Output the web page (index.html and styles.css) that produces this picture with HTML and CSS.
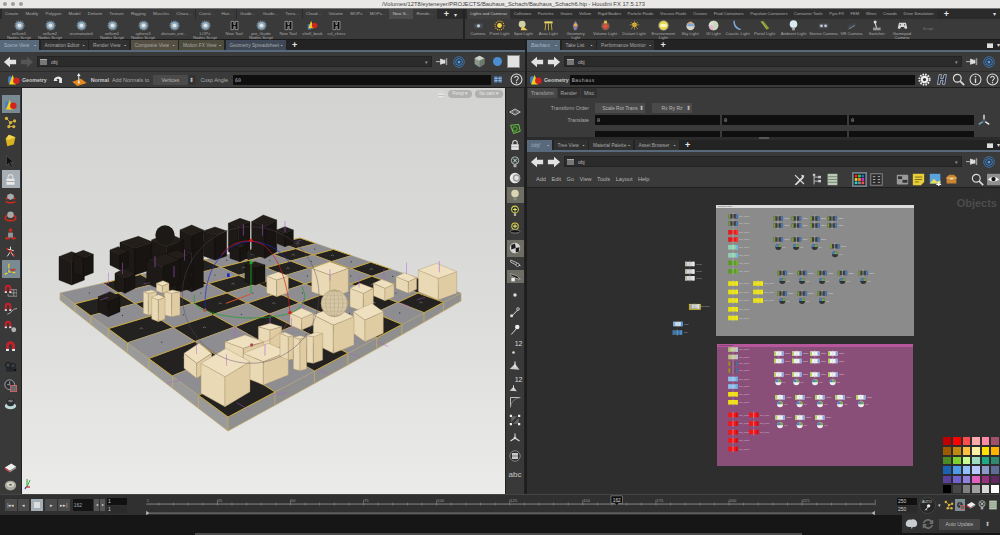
FILE: index.html
```html
<!DOCTYPE html>
<html lang="en">
<head>
<meta charset="utf-8">
<title>Houdini FX 17.5.173</title>
<link rel="stylesheet" href="styles.css">
</head>
<body>
<svg class="defs" width="0" height="0" aria-hidden="true">
  <symbol id="gear" viewBox="0 0 16 16"><circle cx="8" cy="8" r="6" fill="#8ba3b3"/><circle cx="8" cy="8" r="6.6" fill="none" stroke="#6f8797" stroke-width="1.6" stroke-dasharray="1.6 1.2"/><circle cx="8" cy="8" r="3" fill="#dfe6ea"/></symbol>
  <symbol id="hh" viewBox="0 0 16 16"><path d="M3 2h4v4.5h2V2h4v12H9V9.500H7V14H3z" fill="#111" stroke="#d8d8d8" stroke-width=".8"/></symbol>
  <symbol id="geo" viewBox="0 0 16 16"><rect x="1.500" y="4" width="5" height="9" rx="2" fill="#3e7fd0"/><polygon points="7,2 2.500,14 11,14" fill="#f1d21f"/><circle cx="11.500" cy="9.500" r="4" fill="#d3231f"/></symbol>
  <symbol id="back" viewBox="0 0 16 16"><path d="M1 8l7-6v3.500h7v5H8V14z" fill="currentColor"/></symbol>
  <symbol id="fwd" viewBox="0 0 16 16"><path d="M15 8L8 2v3.500H1v5h7V14z" fill="currentColor"/></symbol>
  <symbol id="pin" viewBox="0 0 16 16"><path d="M0 7.500h6M6 4v7l4-1.500h2V5.500h-2z" fill="#ddd" stroke="#ddd"/><rect x="13" y="3" width="2" height="9" fill="#999"/></symbol>
  <symbol id="target" viewBox="0 0 16 16"><circle cx="8" cy="8" r="7" fill="#24364a" stroke="#4f86bd" stroke-width="1"/><circle cx="8" cy="8" r="4.500" fill="none" stroke="#5c9bd8"/><circle cx="8" cy="8" r="2" fill="#5c9bd8"/></symbol>
  <symbol id="cube" viewBox="0 0 16 16"><path d="M8 1l6 3v7l-6 4-6-4V4z" fill="#8b9a8c"/><path d="M8 1l6 3-6 3-6-3z" fill="#c8d2c8"/><path d="M8 7v8l6-4V4z" fill="#6c7a6e"/></symbol>
  <symbol id="help" viewBox="0 0 16 16"><circle cx="8" cy="8" r="6.700" fill="none" stroke="#ddd" stroke-width="1.300"/><path d="M5.800 6.300a2.200 2.200 0 1 1 3.300 1.900c-.8.500-1.100.8-1.100 1.800" fill="none" stroke="#ddd" stroke-width="1.300"/><circle cx="8" cy="12" r=".9" fill="#ddd"/></symbol>
  <symbol id="info" viewBox="0 0 16 16"><circle cx="8" cy="8" r="6.700" fill="none" stroke="#ddd" stroke-width="1.300"/><rect x="7.200" y="6.800" width="1.600" height="5.500" fill="#ddd"/><circle cx="8" cy="4.600" r="1" fill="#ddd"/></symbol>
  <symbol id="mag" viewBox="0 0 16 16"><circle cx="6.500" cy="6.500" r="4.800" fill="none" stroke="#ddd" stroke-width="1.400"/><path d="M10 10l5 5" stroke="#ddd" stroke-width="2"/></symbol>
  <symbol id="wgear" viewBox="0 0 16 16"><circle cx="8" cy="8" r="4.500" fill="#eee"/><circle cx="8" cy="8" r="6.300" fill="none" stroke="#eee" stroke-width="2.400" stroke-dasharray="2 1.300"/><circle cx="8" cy="8" r="2" fill="#333"/></symbol>
  <symbol id="bigh" viewBox="0 0 16 16"><path d="M5 2h3l-1 5h3l1-5h3l-2 12h-3l1-5H7l-1 5H3z" fill="#1c2a44" stroke="#dfe6ef" stroke-width=".8"/></symbol>
  <symbol id="points" viewBox="0 0 16 16"><path d="M3 3l5 5 5-2M8 8l-2 5 6 0" stroke="#c9b56b" fill="none"/><g fill="#d8b33a"><circle cx="3" cy="3" r="2"/><circle cx="8" cy="8" r="2"/><circle cx="13" cy="6" r="2"/><circle cx="6" cy="13" r="2"/><circle cx="12" cy="13" r="2"/></g></symbol>
  <symbol id="ycube" viewBox="0 0 16 16"><path d="M6 1l8 3-2 9-8 2-2-9z" fill="#d8b21f"/><path d="M6 1l8 3-8 3-4-1z" fill="#efd44b"/></symbol>
  <symbol id="arrow" viewBox="0 0 16 16"><path d="M3 1v12l3-3 2.500 5 2-1L8 9h4z" fill="#111" stroke="#666" stroke-width=".6"/></symbol>
  <symbol id="lock" viewBox="0 0 16 16"><path d="M5 7V5a3 3 0 0 1 6 0v2" fill="none" stroke="#ddd" stroke-width="1.400"/><rect x="3" y="7" width="10" height="7.500" fill="#e8e8e8"/><rect x="3" y="10" width="10" height="1" fill="#999"/></symbol>
  <symbol id="hand1" viewBox="0 0 16 16"><path d="M1 9l4-2-1 4zM15 9l-4-2 1 4z" fill="#d02a1a"/><path d="M2 13q6 3 12 0" stroke="#d02a1a" stroke-width="1.800" fill="none"/><path d="M8 3l4 2v4l-4 2-4-2V5z" fill="#a8adb0"/></symbol>
  <symbol id="hand2" viewBox="0 0 16 16"><ellipse cx="8" cy="11" rx="6.500" ry="3.300" fill="none" stroke="#d02a1a" stroke-width="2"/><circle cx="8" cy="7" r="4" fill="#a5a9ac"/></symbol>
  <symbol id="hand3" viewBox="0 0 16 16"><path d="M8 1l3 4H9v2H7V5H5zM1 14l3-3v2h3v2H4v1zM15 14l-3-3v2H9v2h3v1z" fill="#d02a1a"/><rect x="5" y="7" width="6" height="6" fill="#90959a"/></symbol>
  <symbol id="pose" viewBox="0 0 16 16"><path d="M8 2v6l-4 6M8 8l4 6M4 5l8 2" stroke="#ddd" stroke-width="1.200" fill="none"/><g fill="#d02a1a"><circle cx="8" cy="8" r="1.700"/><circle cx="4" cy="5" r="1.200"/><circle cx="12" cy="12" r="1.300"/></g></symbol>
  <symbol id="hsel" viewBox="0 0 16 16"><path d="M6 1v10M6 11L1 14M6 11l8 1" stroke="#f0d020" stroke-width="1.500"/><circle cx="7" cy="10" r="3" fill="none" stroke="#3b6fc4"/><path d="M8 9l6-1" stroke="#d02a1a" stroke-width="2"/></symbol>
  <symbol id="magnet" viewBox="0 0 16 16"><path d="M2.500 13V7a5.500 5.500 0 0 1 11 0v6h-3.500V7a2 2 0 0 0-4 0v6z" fill="#c8202a"/><rect x="2.500" y="11" width="3.500" height="2.500" fill="#eee"/><rect x="10" y="11" width="3.500" height="2.500" fill="#eee"/></symbol>
  <symbol id="maggrid" viewBox="0 0 16 16"><path d="M1 10V5a4 4 0 0 1 8 0v5H6.500V5a1.500 1.500 0 0 0-3 0v5z" fill="#c8202a"/><rect x="1" y="9" width="2.500" height="2" fill="#eee"/><rect x="6.500" y="9" width="2.500" height="2" fill="#eee"/><path d="M8 7h8v8H5v-3M8 11h8M12 7v8" fill="none" stroke="#b8b8b8" stroke-width=".8"/></symbol>
  <symbol id="magcurve" viewBox="0 0 16 16"><path d="M1 10V5a4 4 0 0 1 8 0v5H6.500V5a1.500 1.500 0 0 0-3 0v5z" fill="#c8202a"/><rect x="1" y="9" width="2.500" height="2" fill="#eee"/><rect x="6.500" y="9" width="2.500" height="2" fill="#eee"/><path d="M4 15q4-1 6-4t6-3" fill="none" stroke="#c8c8c8" stroke-width=".9"/></symbol>
  <symbol id="magball" viewBox="0 0 16 16"><path d="M1 9V5a4 4 0 0 1 8 0v4H6.500V5a1.500 1.500 0 0 0-3 0v4z" fill="#c8202a"/><rect x="1" y="8" width="2.500" height="2" fill="#eee"/><rect x="6.500" y="8" width="2.500" height="2" fill="#eee"/><circle cx="12" cy="12" r="3" fill="#b4b4b4"/></symbol>
  <symbol id="cam" viewBox="0 0 16 16"><circle cx="5" cy="5" r="3.300" fill="#3a4046" stroke="#111"/><circle cx="11" cy="6" r="3" fill="#3a4046" stroke="#111"/><rect x="3" y="8" width="9" height="5" fill="#23272b"/><path d="M12 10l3-1v4l-3-1z" fill="#111"/></symbol>
  <symbol id="clock" viewBox="0 0 16 16"><circle cx="7" cy="7" r="6" fill="#2b2f33" stroke="#bbb"/><path d="M7 3v4h-3" stroke="#bbb" fill="none"/><rect x="8" y="8" width="7.500" height="7.500" fill="#6b6b6b" stroke="#d66"/></symbol>
  <symbol id="dome" viewBox="0 0 16 16"><ellipse cx="8" cy="11" rx="7" ry="4" fill="#bcd8d8"/><ellipse cx="8" cy="6.500" rx="5" ry="5" fill="#2c3034"/><ellipse cx="8" cy="5" rx="3" ry="1.500" fill="#777"/></symbol>
  <symbol id="pencil" viewBox="0 0 16 16"><path d="M1 8l8-5 6 4-8 5z" fill="#eee"/><path d="M1 8l6 4v2L1 10z" fill="#c44"/><path d="M7 12l8-5v2l-8 5z" fill="#999"/></symbol>
  <symbol id="disk" viewBox="0 0 16 16"><ellipse cx="8" cy="8" rx="7" ry="6" fill="#a8a89e"/><ellipse cx="8" cy="7" rx="4.500" ry="3" fill="#d6d6ca"/><ellipse cx="8" cy="7" rx="2" ry="1.300" fill="#6f6f66"/></symbol>
  <symbol id="swirl" viewBox="0 0 16 16"><path d="M2 6q6-5 11 0v7H9V8q-2-2-4 0l2 2H1z" fill="#e6e6e6"/></symbol>
  <symbol id="normal" viewBox="0 0 22 18"><polygon points="1,12 13,8 21,14 8,18" fill="#e68a1e"/><path d="M10 13V3" stroke="#eee" stroke-width="1.400"/><path d="M10 0l2.500 4h-5z" fill="#eee"/><circle cx="10" cy="13" r="1.400" fill="#eee"/></symbol>
  <symbol id="plane" viewBox="0 0 16 16"><path d="M1 8l7-4 7 4-7 4z" fill="none" stroke="#ddd" stroke-width="1.200"/><path d="M4 8l4-2 4 2-4 2z" fill="none" stroke="#999"/></symbol>
  <symbol id="ggrid" viewBox="0 0 16 16"><path d="M2 3l11-1 2 9-9 3z" fill="#2d4a2a" stroke="#78c850" stroke-width="1.200"/><circle cx="8" cy="8" r="3" fill="none" stroke="#78c850"/></symbol>
  <symbol id="bulbx" viewBox="0 0 16 16"><circle cx="8" cy="6" r="5" fill="#39423f" stroke="#cfd8d0"/><rect x="6" y="11" width="4" height="4" fill="#aaa"/><path d="M5.500 3.500l5 5m0-5l-5 5" stroke="#eee" stroke-width="1.200"/></symbol>
  <symbol id="ball" viewBox="0 0 16 16"><circle cx="8" cy="8" r="7" fill="#e9e9e9"/><circle cx="10" cy="8" r="5" fill="#9a9a9a"/><circle cx="10" cy="8" r="3" fill="#e0e0e0"/></symbol>
  <symbol id="bulb" viewBox="0 0 16 16"><circle cx="8" cy="6" r="5" fill="#d9d6b8"/><rect x="6" y="11" width="4" height="4" fill="#8a8a7a"/></symbol>
  <symbol id="ybulb" viewBox="0 0 16 16"><circle cx="8" cy="6" r="4.500" fill="#2c3030" stroke="#d6d24a" stroke-width="1.400"/><rect x="6.500" y="11" width="3" height="3.500" fill="#b5b5a0"/><path d="M8 3.500v5M5.500 6h5" stroke="#e8e46a" stroke-width="1.400"/></symbol>
  <symbol id="ybulb2" viewBox="0 0 16 16"><circle cx="8" cy="5.500" r="4.300" fill="#2c3030" stroke="#d6d24a" stroke-width="1.400"/><path d="M8 3v5M5.500 5.500h5" stroke="#e8e46a" stroke-width="1.400"/><ellipse cx="8" cy="12.500" rx="6.500" ry="2.300" fill="#111" stroke="#999"/></symbol>
  <symbol id="camball" viewBox="0 0 16 16"><circle cx="8" cy="8" r="7" fill="#d5d5d5"/><path d="M3 4l5-2 1 6-6 2zM9 8l5-1-1 6-4 1z" fill="#1c1c1c"/></symbol>
  <symbol id="glasses" viewBox="0 0 16 16"><path d="M1 3l9 4 5 4-6-1-8-4z" fill="none" stroke="#ddd" stroke-width="1.100"/><circle cx="11" cy="10" r="2.300" fill="#222" stroke="#ddd"/></symbol>
  <symbol id="camsel" viewBox="0 0 16 16"><path d="M1 4l9 3 5 5-5-1-9-4z" fill="#222" stroke="#ddd" stroke-width=".8"/><rect x="2" y="10" width="5" height="5" fill="#eee"/></symbol>
  <symbol id="dot" viewBox="0 0 16 16"><circle cx="8" cy="8" r="2.300" fill="#ddd"/></symbol>
  <symbol id="meas1" viewBox="0 0 16 16"><path d="M3 14L12 5" stroke="#ddd" stroke-width="1.300"/><circle cx="3.500" cy="13" r="2" fill="#ddd"/><circle cx="12" cy="4" r="1.800" fill="none" stroke="#ddd"/></symbol>
  <symbol id="drop" viewBox="0 0 16 16"><path d="M3 14l7-8" stroke="#ddd" stroke-width="1.300"/><circle cx="11" cy="4" r="3" fill="#eee"/></symbol>
  <symbol id="wedge" viewBox="0 0 16 16"><path d="M1 12l7-7 6 8z" fill="#ccc"/><path d="M8 2v8" stroke="#eee" stroke-width="1.400"/></symbol>
  <symbol id="corner" viewBox="0 0 16 16"><path d="M2 15V2h13" fill="none" stroke="#ccc" stroke-width="1.200"/><path d="M2 15Q3 4 15 2" fill="none" stroke="#888"/></symbol>
  <symbol id="selbox" viewBox="0 0 16 16"><rect x="3" y="3" width="10" height="10" fill="#666"/><path d="M3 13L13 3" stroke="#333" stroke-width="3"/><g fill="#eee"><rect x="1" y="1" width="3" height="3"/><rect x="12" y="1" width="3" height="3"/><rect x="1" y="12" width="3" height="3"/><rect x="12" y="12" width="3" height="3"/></g></symbol>
  <symbol id="tri" viewBox="0 0 16 16"><path d="M8 8V2M8 8L2 12M8 8l6 4" stroke="#ddd" stroke-width="1.400"/><circle cx="8" cy="8" r="1.800" fill="#ddd"/></symbol>
  <symbol id="ringbox" viewBox="0 0 16 16"><circle cx="8" cy="8" r="7" fill="#333" stroke="#999"/><rect x="4" y="4" width="8" height="8" fill="#c8c8c8"/><rect x="4" y="7.500" width="8" height="1" fill="#555"/></symbol>
  <symbol id="axis" viewBox="0 0 16 16"><path d="M8 9V2" stroke="#eee" stroke-width="1.500"/><path d="M8 9l-6 4" stroke="#7ab" stroke-width="1.500"/><path d="M8 9l6 4" stroke="#eee" stroke-width="1.500"/><circle cx="8" cy="9" r="2" fill="#456"/></symbol>
  <symbol id="tools" viewBox="0 0 16 16"><path d="M2 14L11 5l-1-3 4 1-1 3-9 9zM3 2l11 11-1 1L2 3z" fill="#ddd"/></symbol>
  <symbol id="tree" viewBox="0 0 16 16"><path d="M5 2v12M5 5h5M5 10h5" stroke="#bbb" stroke-width="1.200"/><rect x="10" y="3.500" width="3.500" height="3" fill="#ccc"/><rect x="10" y="8.500" width="3.500" height="3" fill="#ccc"/><rect x="3.500" y="1" width="3" height="2.500" fill="#ccc"/></symbol>
  <symbol id="list" viewBox="0 0 16 16"><rect x="2" y="1" width="12" height="14" fill="#b9cbb4"/><path d="M2 4.500h12M2 8h12M2 11.500h12" stroke="#6e7d6b"/></symbol>
  <symbol id="cgrid" viewBox="0 0 16 16"><rect x="1" y="1" width="14" height="14" fill="#111"/><g><rect x="2" y="2" width="3.500" height="3.500" fill="#d33"/><rect x="6.200" y="2" width="3.500" height="3.500" fill="#3c3"/><rect x="10.400" y="2" width="3.500" height="3.500" fill="#36c"/><rect x="2" y="6.200" width="3.500" height="3.500" fill="#ec3"/><rect x="6.200" y="6.200" width="3.500" height="3.500" fill="#e83"/><rect x="10.400" y="6.200" width="3.500" height="3.500" fill="#c3c"/><rect x="2" y="10.400" width="3.500" height="3.500" fill="#3cc"/><rect x="6.200" y="10.400" width="3.500" height="3.500" fill="#888"/><rect x="10.400" y="10.400" width="3.500" height="3.500" fill="#e55"/></g></symbol>
  <symbol id="sgrid" viewBox="0 0 16 16"><rect x="1" y="1" width="14" height="14" fill="#2a2a2a" stroke="#999"/><path d="M3.500 4.500h3M9.500 4.500h3M3.500 8h3M9.500 8h3M3.500 11.500h3M9.500 11.500h3" stroke="#ccc"/></symbol>
  <symbol id="netbox" viewBox="0 0 16 16"><rect x="1" y="2" width="14" height="12" rx="1" fill="#9a9a9a"/><rect x="2.500" y="4" width="5" height="3.500" fill="#333"/><rect x="8" y="8.500" width="6" height="3.500" fill="#333"/></symbol>
  <symbol id="sticky" viewBox="0 0 16 16"><path d="M1 1h14v10l-4 4H1z" fill="#e8cf3a"/><path d="M3.500 5h9M3.500 8h9M3.500 11h5" stroke="#675c10"/></symbol>
  <symbol id="image" viewBox="0 0 16 16"><rect x="1" y="1" width="13" height="12" fill="#5ba3dc"/><path d="M1 13l5-6 4 4 4-2v4z" fill="#e9dd5a"/><path d="M9 14h6M12 11v6" stroke="#fff" stroke-width="1.400"/></symbol>
  <symbol id="crate" viewBox="0 0 16 16"><path d="M2 5l3-3h6l3 3v8H2z" fill="#c78432"/><rect x="2" y="5" width="12" height="2.500" fill="#e3a14a"/><rect x="6" y="6" width="4" height="2" fill="#f2d9a8"/></symbol>
  <symbol id="eye" viewBox="0 0 16 16"><rect x="0" y="1" width="16" height="14" fill="#8f8f8f"/><path d="M1 8q7-7 14 0q-7 5-14 0z" fill="#fff"/><circle cx="8" cy="7.500" r="2.700" fill="#111"/></symbol>
  <symbol id="brain" viewBox="0 0 16 16"><path d="M2 8a5 5 0 0 1 6-5 5 5 0 0 1 7 5c0 3-3 4-5 3l-1 3-1-3C5 12 2 11 2 8z" fill="#c8ccd0"/></symbol>
  <symbol id="refresh" viewBox="0 0 16 16"><path d="M2 7a6 6 0 0 1 10-3l2-1v5H9l2-2a4 4 0 0 0-7 1zM14 9a6 6 0 0 1-10 3l-2 1V8h5l-2 2a4 4 0 0 0 7-1z" fill="#6d6f6d"/></symbol>
  <symbol id="skey" viewBox="0 0 16 16"><circle cx="10" cy="5" r="3" fill="#eee"/><path d="M9 7l-5 6M5 11l2 2" stroke="#eee" stroke-width="1.500"/></symbol>
  <symbol id="camera2" viewBox="0 0 16 16"><rect x="2" y="5" width="12" height="7" rx="1" fill="#4a4f55"/><circle cx="8" cy="8.500" r="2.500" fill="#bcc"/></symbol>
  <symbol id="sun" viewBox="0 0 16 16"><circle cx="8" cy="8" r="3.500" fill="#f4d24a"/><circle cx="8" cy="8" r="6.500" fill="none" stroke="#f0b828" stroke-width="1.500" stroke-dasharray="1.500 1.500"/></symbol>
  <symbol id="spot" viewBox="0 0 16 16"><circle cx="6" cy="6" r="5" fill="#cfcfa8"/><path d="M6 8l8 7H4z" fill="#e8c860"/></symbol>
  <symbol id="area" viewBox="0 0 16 16"><rect x="2" y="2" width="12" height="3" fill="#e8d870"/><path d="M4 5l-1 10M12 5l1 10M8 5v10" stroke="#d8c040" stroke-width="1.200"/></symbol>
  <symbol id="geolight" viewBox="0 0 16 16"><path d="M8 1l4 7-3 7H6L4 8z" fill="#8a7aa8"/><circle cx="8" cy="7" r="2.400" fill="#e8b040"/></symbol>
  <symbol id="vol" viewBox="0 0 16 16"><circle cx="8" cy="9" r="6" fill="#8a5a50"/><circle cx="8" cy="9" r="3" fill="#f05030"/><rect x="6" y="1" width="4" height="4" fill="#e8c850"/></symbol>
  <symbol id="dist" viewBox="0 0 16 16"><circle cx="8" cy="7" r="3.500" fill="#e8c040"/><path d="M3 3l10 10M13 3L3 13M8 1v13M1 7h14" stroke="#c09a30"/></symbol>
  <symbol id="env" viewBox="0 0 16 16"><circle cx="8" cy="8" r="7" fill="#e8d850" stroke="#888"/><ellipse cx="8" cy="8" rx="5" ry="2.500" fill="#fff5c0"/></symbol>
  <symbol id="sky" viewBox="0 0 16 16"><circle cx="8" cy="9" r="6" fill="#d8d4c8"/><path d="M3 9a5 5 0 0 1 10 0z" fill="#7ca8d8"/><circle cx="8" cy="4" r="2" fill="#e8a060"/></symbol>
  <symbol id="gi" viewBox="0 0 16 16"><circle cx="8" cy="8" r="7" fill="#dcdcd0"/><path d="M8 1a7 7 0 0 1 0 14z" fill="#c8d8c0"/><path d="M1 8a7 7 0 0 0 7 7V8z" fill="#e0b8c8"/></symbol>
  <symbol id="caustic" viewBox="0 0 16 16"><path d="M4 1q0 9 9 12l-1 2Q1 12 2 1z" fill="#7aa6d6"/></symbol>
  <symbol id="portal" viewBox="0 0 16 16"><path d="M2 2l4-1 9 11-4 2z" fill="#7c9a38"/><path d="M4 3l8 10" stroke="#d8c050"/></symbol>
  <symbol id="amb" viewBox="0 0 16 16"><circle cx="8" cy="6" r="5.500" fill="#d8ecf0"/><rect x="6" y="11" width="4" height="4" fill="#aaa"/></symbol>
  <symbol id="stereo" viewBox="0 0 16 16"><rect x="1" y="5" width="14" height="7" rx="1" fill="#4a4f55"/><circle cx="5" cy="8.500" r="2" fill="#ccd"/><circle cx="11" cy="8.500" r="2" fill="#ccd"/></symbol>
  <symbol id="vr" viewBox="0 0 16 16"><path d="M1 9l11-5 3 3-11 6z" fill="#3f454b"/><path d="M4 13l9-5" stroke="#9ab"/></symbol>
  <symbol id="switcher" viewBox="0 0 16 16"><rect x="3" y="11" width="11" height="4" fill="#999"/><path d="M8 11L6 4" stroke="#ddd" stroke-width="1.500"/><circle cx="6" cy="3" r="2.200" fill="#ddd"/></symbol>
  <symbol id="pad" viewBox="0 0 16 16"><path d="M3 4h10l2 8-3 1-2-3H6l-2 3-3-1z" fill="#d8d8d8"/><circle cx="5" cy="7" r="1" fill="#333"/><circle cx="11" cy="7" r="1" fill="#333"/></symbol>
  <symbol id="book" viewBox="0 0 16 16"><rect x="1" y="6" width="5" height="8" fill="#3a78c8"/><polygon points="6,1 2,12 10,12" fill="#f1d21f"/><circle cx="11" cy="8" r="4" fill="#d3231f"/></symbol>
  <symbol id="stripes" viewBox="0 0 16 16"><rect x="2" y="3" width="5" height="10" fill="#4a80c0"/><rect x="9" y="3" width="5" height="10" fill="#4a80c0"/><path d="M2 6h12M2 10h12" stroke="#d8e0ea"/></symbol>
</svg>

<div class="app">
  <header class="titlebar">
    <div class="lights"><i></i><i></i><i></i></div>
    <div class="wintitle">/Volumes/12T8/eyteneyer/PROJECTS/Bauhaus_Schach/Bauhaus_Schach6.hip - Houdini FX 17.5.173</div>
  </header>

  <section class="shelves">
    <div class="shelf shelf-l">
      <nav class="stabs">
        <span>Create</span><span>Modify</span><span>Polygon</span><span>Model</span><span>Deform</span><span>Texture</span><span>Rigging</span><span>Muscles</span><span>Chara...</span><span>Const...</span><span>Hair...</span><span>Guide...</span><span>Guide...</span><span>Terra...</span><span>Cloud...</span><span>Volume</span><span>MOPs</span><span>MOPs...</span><span class="on">New S...</span><span>Rende...</span><b class="plus">+</b><b class="caret">▾</b>
      </nav>
      <div class="tools tools-l">
        <div class="tool"><svg><use href="#gear"/></svg><p>vellum1<br>Nodes Script</p></div>
        <div class="tool"><svg><use href="#gear"/></svg><p>vellum2<br>Nodes Script</p></div>
        <div class="tool"><svg><use href="#gear"/></svg><p>resimonated</p></div>
        <div class="tool"><svg><use href="#gear"/></svg><p>vellum1<br>Nodes Script</p></div>
        <div class="tool"><svg><use href="#gear"/></svg><p>sphere3<br>Nodes Script</p></div>
        <div class="tool"><svg><use href="#gear"/></svg><p>division_ext...</p></div>
        <div class="tool"><svg><use href="#gear"/></svg><p>LOPs<br>Nodes Script</p></div>
        <div class="tool"><svg><use href="#hh"/></svg><p>New Tool</p></div>
        <div class="tool"><svg><use href="#gear"/></svg><p>pre_Guide<br>Nodes Script</p></div>
        <div class="tool"><svg><use href="#hh"/></svg><p>New Tool</p></div>
        <div class="tool"><svg><use href="#book"/></svg><p>shelf_book</p></div>
        <div class="tool"><svg><use href="#hh"/></svg><p>ssl_chess</p></div>
      </div>
    </div>
    <div class="shelf shelf-r">
      <nav class="stabs">
        <span class="on">Lights and Cameras</span><span>Collisions</span><span>Particles</span><span>Grains</span><span>Vellum</span><span>Rigid Bodies</span><span>Particle Fluids</span><span>Viscous Fluids</span><span>Oceans</span><span>Fluid Containers</span><span>Populate Containers</span><span>Container Tools</span><span>Pyro FX</span><span>FEM</span><span>Wires</span><span>Crowds</span><span>Drive Simulation</span><b class="plus">+</b><b class="caret end">▾</b>
      </nav>
      <div class="tools tools-r">
        <div class="tool"><svg><use href="#camera2"/></svg><p>Camera</p></div>
        <div class="tool"><svg><use href="#sun"/></svg><p>Point Light</p></div>
        <div class="tool"><svg><use href="#spot"/></svg><p>Spot Light</p></div>
        <div class="tool"><svg><use href="#area"/></svg><p>Area Light</p></div>
        <div class="tool"><svg><use href="#geolight"/></svg><p>Geometry<br>Light</p></div>
        <div class="tool"><svg><use href="#vol"/></svg><p>Volume Light</p></div>
        <div class="tool"><svg><use href="#dist"/></svg><p>Distant Light</p></div>
        <div class="tool"><svg><use href="#env"/></svg><p>Environment<br>Light</p></div>
        <div class="tool"><svg><use href="#sky"/></svg><p>Sky Light</p></div>
        <div class="tool"><svg><use href="#gi"/></svg><p>GI Light</p></div>
        <div class="tool"><svg><use href="#caustic"/></svg><p>Caustic Light</p></div>
        <div class="tool"><svg><use href="#portal"/></svg><p>Portal Light</p></div>
        <div class="tool"><svg><use href="#amb"/></svg><p>Ambient Light</p></div>
        <div class="tool"><svg><use href="#stereo"/></svg><p>Stereo Camera</p></div>
        <div class="tool"><svg><use href="#vr"/></svg><p>VR Camera</p></div>
        <div class="tool"><svg><use href="#switcher"/></svg><p>Switcher</p></div>
        <div class="tool"><svg><use href="#pad"/></svg><p>Gamepad<br>Camera</p></div>
        <div class="tool script"><p>Script</p></div>
      </div>
    </div>
  </section>

  <main class="workspace">
    <section class="pane pane-scene">
      <nav class="ptabs">
        <span class="on w39">Scene View<i>▪</i></span><span class="w47">Animation Editor<i>▪</i></span><span class="w40">Render View<i>▪</i></span><span class="tan w47">Composite View<i>▪</i></span><span class="olive w45">Motion FX View<i>▪</i></span><span class="slate w60">Geometry Spreadsheet<i>▪</i></span><b class="plus">+</b>
      </nav>
      <div class="pathbar">
        <svg class="nav white"><use href="#back"/></svg><svg class="nav grey"><use href="#fwd"/></svg>
        <div class="pathfield"><span class="folder"></span>obj<i class="drop">▾</i></div>
        <svg class="pi"><use href="#pin"/></svg><svg class="pi"><use href="#target"/></svg>
        <svg class="pi cubei"><use href="#cube"/></svg><span class="bluedot"></span><span class="whitesq"></span>
      </div>
      <div class="opbar">
        <svg class="opi first"><use href="#geo"/></svg><b>Geometry</b>
        <svg class="opi swirl"><use href="#swirl"/></svg><svg class="opi normal"><use href="#normal"/></svg>
        <b>Normal</b><span class="lbl">Add Normals to</span>
        <span class="select vert">Vertices</span><i class="spin">⬍</i>
        <span class="lbl cusp">Cusp Angle</span><span class="field cuspf">60</span>
        <svg class="opi stripes"><use href="#stripes"/></svg><svg class="opi"><use href="#help"/></svg>
      </div>
      <div class="scenebody">
        <aside class="tbar tbar-l">
          <div class="tb sel"><svg><use href="#geo"/></svg></div>
          <div class="tb"><svg><use href="#points"/></svg></div>
          <div class="tb"><svg><use href="#ycube"/></svg></div>
          <div class="tb g3"><svg><use href="#arrow"/></svg></div>
          <div class="tb sel"><svg><use href="#lock"/></svg></div>
          <div class="tb"><svg><use href="#hand1"/></svg></div>
          <div class="tb"><svg><use href="#hand2"/></svg></div>
          <div class="tb"><svg><use href="#hand3"/></svg></div>
          <div class="tb"><svg><use href="#pose"/></svg></div>
          <div class="tb sel"><svg><use href="#hsel"/></svg></div>
          <div class="tb g3"><svg><use href="#maggrid"/></svg></div>
          <div class="tb"><svg><use href="#magcurve"/></svg></div>
          <div class="tb"><svg><use href="#magball"/></svg></div>
          <div class="tb g2"><svg><use href="#magnet"/></svg></div>
          <div class="tb g3"><svg><use href="#cam"/></svg></div>
          <div class="tb"><svg><use href="#clock"/></svg></div>
          <div class="tb"><svg><use href="#dome"/></svg></div>
          <div class="tb push"><svg><use href="#pencil"/></svg></div>
          <div class="tb"><svg><use href="#disk"/></svg></div>
        </aside>
        <div class="viewport">
          <svg id="scene" class="scene" viewBox="22 88 483 406"></svg>
          <div class="vpbtns"><svg class="vlock"><use href="#lock"/></svg><span>Persp ▾</span><span>No cam ▾</span></div>
        </div>
        <aside class="tbar tbar-r">
          <div class="rb"><svg><use href="#plane"/></svg></div>
          <div class="rb"><svg><use href="#ggrid"/></svg></div>
          <div class="rb"><svg><use href="#lock"/></svg></div>
          <div class="rb"><svg><use href="#bulbx"/></svg></div>
          <div class="rb"><svg><use href="#ball"/></svg></div>
          <div class="rb sel"><svg><use href="#bulb"/></svg></div>
          <div class="rb"><svg><use href="#ybulb"/></svg></div>
          <div class="rb"><svg><use href="#ybulb2"/></svg></div>
          <div class="rb sel g4"><svg><use href="#camball"/></svg></div>
          <div class="rb thin"><svg><use href="#glasses"/></svg></div>
          <div class="rb sel thin"><svg><use href="#camsel"/></svg></div>
          <div class="rb g4"><svg><use href="#dot"/></svg></div>
          <div class="rb wide"><svg><use href="#meas1"/></svg></div>
          <div class="rb wide"><svg><use href="#drop"/></svg></div>
          <div class="rb wide txt"><em>12</em><svg class="dotmini"><use href="#dot"/></svg></div>
          <div class="rb wide"><svg><use href="#wedge"/></svg></div>
          <div class="rb wide txt"><em>12</em><svg class="dotmini"><use href="#wedge"/></svg></div>
          <div class="rb wide"><svg><use href="#corner"/></svg></div>
          <div class="rb wide"><svg><use href="#selbox"/></svg></div>
          <div class="rb wide"><svg><use href="#tri"/></svg></div>
          <div class="rb wide"><svg><use href="#ringbox"/></svg></div>
          <div class="rb wide abc">abc</div>
        </aside>
      </div>
    </section>

    <section class="rightcol">
      <section class="pane pane-params">
        <nav class="ptabs">
          <span class="on it w33">Bauhaus<i>▪</i></span><span class="w34">Take List<i>▪</i></span><span class="w57">Performance Monitor<i>▪</i></span><b class="plus">+</b>
          <span class="tabend"><u></u><em>▾</em></span>
        </nav>
        <div class="pathbar">
          <svg class="nav white"><use href="#back"/></svg><svg class="nav white"><use href="#fwd"/></svg>
          <div class="pathfield"><span class="folder"></span>obj<i class="drop">▾</i></div>
          <svg class="pi"><use href="#pin"/></svg><svg class="pi"><use href="#target"/></svg>
        </div>
        <div class="opbar geobar">
          <svg class="opi first"><use href="#geo"/></svg><b>Geometry</b>
          <span class="field namef">Bauhaus</span>
          <svg class="opi big"><use href="#wgear"/></svg><svg class="opi big"><use href="#bigh"/></svg><svg class="opi big"><use href="#mag"/></svg><svg class="opi big"><use href="#info"/></svg><svg class="opi big"><use href="#help"/></svg>
        </div>
        <div class="paramtabs"><span class="on">Transform</span><span>Render</span><span>Misc</span></div>
        <div class="params">
          <div class="prow"><label>Transform Order</label><span class="select sr">Scale Rot Trans<i>⬍</i></span><span class="select rx">Rx Ry Rz<i>⬍</i></span></div>
          <div class="prow"><label>Translate</label><span class="field v">0</span><span class="field v">0</span><span class="field v">0</span><svg class="axis"><use href="#axis"/></svg></div>
          <div class="prow cut"><label></label><span class="field v"></span><span class="field v"></span><span class="field v"></span></div>
        </div>
      </section>
      <div class="splitter"><i></i></div>
      <section class="pane pane-net">
        <nav class="ptabs">
          <span class="on it w25">/obj/<i>▪</i></span><span class="w34">Tree View<i>▪</i></span><span class="w44">Material Palette<i>▪</i></span><span class="w44">Asset Browser<i>▪</i></span><b class="plus">+</b>
          <span class="tabend"><u></u><em>▾</em></span>
        </nav>
        <div class="pathbar">
          <svg class="nav white"><use href="#back"/></svg><svg class="nav white"><use href="#fwd"/></svg>
          <div class="pathfield"><span class="folder"></span>obj<i class="drop">▾</i></div>
          <svg class="pi"><use href="#pin"/></svg><svg class="pi"><use href="#target"/></svg>
        </div>
        <div class="menubar">
          <span>Add</span><span>Edit</span><span>Go</span><span>View</span><span>Tools</span><span>Layout</span><span>Help</span>
          <div class="menuicons">
            <svg class="push2"><use href="#tools"/></svg><svg><use href="#tree"/></svg><svg><use href="#list"/></svg>
            <span class="seli m"><svg><use href="#cgrid"/></svg></span><svg><use href="#sgrid"/></svg>
            <svg class="m"><use href="#netbox"/></svg><svg><use href="#sticky"/></svg><svg><use href="#image"/></svg><svg><use href="#crate"/></svg>
            <svg class="m"><use href="#mag"/></svg><svg><use href="#eye"/></svg>
          </div>
        </div>
        <div class="netcanvas">
          <svg id="net" class="net" viewBox="527 187 473 307"></svg>
          <div class="objects">Objects</div>
          <div class="palette" id="palette"></div>
        </div>
      </section>
    </section>
  </main>

  <section class="timeline">
    <div class="transport">
      <span class="tbtn">|◂◂</span><span class="tbtn">◂</span><span class="tbtn stop"><i></i></span><span class="tbtn">▸</span><span class="tbtn">▸▸|</span>
      <span class="frame">162</span><span class="tstep">◂</span><span class="tstep">▸</span>
      <div class="range"><span>1</span><span>1</span></div>
    </div>
    <svg id="ruler" class="ruler" viewBox="127 494 768 21"></svg>
    <div class="tend">
      <div class="range r2"><span>250</span><span>250</span></div>
      <span class="autokey"><small>AUTO</small><svg><use href="#skey"/></svg></span><i class="tcaret">▾</i>
      <svg class="ti"><use href="#points"/></svg><span class="ti sel"><svg><use href="#clock"/></svg></span><svg class="ti"><use href="#pencil"/></svg><svg class="ti"><use href="#bulbx"/></svg><svg class="ti"><use href="#list"/></svg>
    </div>
  </section>

  <footer class="status">
    <div class="statusline"></div>
    <div class="updater">
      <svg class="ub"><use href="#brain"/></svg><svg class="ub"><use href="#refresh"/></svg>
      <span class="select au">Auto Update</span><i class="spin">⬍</i>
    </div>
  </footer>
</div>
<script src="app.js"></script>
</body>
</html>
```
FILE: styles.css
```css
*{box-sizing:border-box}
html,body{margin:0;padding:0;background:#161616}
body{width:1000px;height:535px;overflow:hidden;font-family:"Liberation Sans",Arial,sans-serif;font-size:5.500px;color:#b4b4b4}
.defs{position:absolute}
svg{display:block;overflow:visible}
p{margin:0}
.app{display:grid;grid-template-rows:9px 31px 454px 21px 20px;width:1000px;height:535px}

.titlebar{background:#e9e8e6;display:flex;align-items:center;position:relative;border-bottom:1px solid #777}
.lights{display:flex;gap:4px;padding-left:3px}
.lights i{width:4px;height:4px;border-radius:50%;background:#9c9c9c}
.wintitle{position:absolute;left:382px;top:1px;font-size:5.800px;color:#444;white-space:nowrap;line-height:7px}

.shelves{display:grid;grid-template-columns:465px 535px;background:#3a3a3a;border-bottom:1px solid #1b1b1b}
.shelf{display:flex;flex-direction:column;min-width:0}
.shelf-l{border-right:2px solid #222}
.stabs{display:flex;height:10px;background:#2a2a2a;align-items:center;padding-left:1.500px;overflow:hidden}
.stabs span{padding:0 3.500px;height:10px;line-height:10px;font-size:4.400px;background:#3a3a3a;margin-right:.2px;color:#a9a9a9;white-space:nowrap}
.stabs span.on{background:#4c4c4c;color:#c5c5c5}
.shelf-r .stabs{padding-left:2px}
.shelf-r .stabs span{background:#2f2f2f;padding:0 3.300px;font-size:4.120px;margin-right:0}
.shelf-r .stabs span.on{background:#3f3f3f}
.plus{font-size:9px;color:#e8e8e8;margin-left:7px;line-height:9px;font-weight:700}
.caret{font-size:6px;color:#ddd;margin-left:5px;font-weight:400}
.caret.end{margin-left:auto;margin-right:4px;line-height:8px}
.tools{flex:1;display:grid;align-items:start}
.tools-l{grid-template-columns:31px 31px 31px 31px 31px 31px 31px 27px 27px 27px 22px 26px;padding-left:3.500px}
.tools-r{grid-template-columns:20px 23px 24.500px 25.500px 29.500px 29px 29px 29.500px 24px 22.500px 26px 28px 30px 30px 26px 24.500px 26px 26px;padding-left:3px}
.tool{display:flex;flex-direction:column;align-items:center;text-align:center;color:#a9a9a9;font-size:4.200px;line-height:4.300px;padding-top:1px;white-space:nowrap}
.tool svg{width:11px;height:11px}
.tool p{margin-top:.5px}
.tool.script p{margin-top:7px;color:#777}

.workspace{display:grid;grid-template-columns:525px 2px 473px;grid-template-areas:"a . b";background:#1d1d1d;min-height:0}
.pane-scene{grid-area:a}
.rightcol{grid-area:b;display:flex;flex-direction:column;min-height:0}
.pane{display:flex;flex-direction:column;background:#3a3a3a;min-height:0;overflow:hidden}

.ptabs{display:flex;height:10px;background:#232323;align-items:stretch;flex:none}
.ptabs span{display:flex;align-items:center;justify-content:space-between;padding:0 3px 0 4px;font-size:4.800px;background:#313131;margin-right:1.500px;color:#a8a8a8;white-space:nowrap}
.ptabs span i{font-style:normal;font-size:4px;color:#ddd}
.ptabs span.on{background:#58697c;color:#a9b6c2}
.ptabs span.it{font-style:italic}
.ptabs span.tan{background:#544f42}
.ptabs span.olive{background:#4c4b3c}
.ptabs span.slate{background:#3f4856}
.ptabs .plus{margin-left:5px;line-height:10px}
.ptabs .tabend{margin-left:auto;background:none;gap:4px;padding-right:0;margin-right:0}
.w25{width:25px}
.w33{width:33px}
.w34{width:34px}
.w39{width:39px}
.w40{width:40px}
.w44{width:44px}
.w45{width:45px}
.w47{width:47px}
.w57{width:57px}
.w60{width:60px}
.tabend u{display:block;width:6px;height:5px;background:#ddd;border-top:1px solid #999}
.tabend em{font-style:normal;font-size:5.500px;color:#ddd}

.pathbar{height:21px;flex:none;display:flex;align-items:center;background:linear-gradient(#58697c 0,#58697c 2px,#3a3a3a 2px);padding:2px 0 0 3px}
.nav{width:14px;height:14px;margin-right:3px}
.white{color:#e2e2e2}
.grey{color:#555}
.pathfield{flex:1;height:11px;background:#2b2b2b;border:1px solid #232323;display:flex;align-items:center;font-size:5px;color:#bbb;padding-left:2px;margin-right:4px}
.folder{width:7px;height:6px;background:#777;margin:0 4px 0 0;border-top:1px solid #aaa}
.drop{margin-left:auto;font-style:normal;color:#999;font-size:5px;padding-right:3px}
.pi{width:12px;height:12px;margin-right:5px}
.pi.cubei{margin:0 7px 0 3px;width:13px;height:13px}
.bluedot{width:9px;height:9px;border-radius:50%;background:#4c8dd0;margin-right:5px;flex:none}
.whitesq{width:13px;height:13px;background:#e2e2e2;border:1px solid #888;margin-right:5px;flex:none}

.opbar{height:17px;flex:none;display:flex;align-items:center;padding-left:7px;border-top:1px solid #2c2c2c;border-bottom:1px solid #1f1f1f;font-size:5.400px;background:#3a3a3a}
.opbar b{color:#c9c9c9;font-size:5.300px;font-weight:700}
.lbl{color:#a9a9a9;white-space:nowrap}
.opi{width:13px;height:13px;flex:none;margin-right:2px}
.opi.first{margin-right:2px}
.opi.swirl{margin:0 7px 0 6px;width:11px;height:11px}
.opi.normal{width:17px;margin-right:3px}
.opbar b+.lbl{margin-left:3px}
.select{display:inline-flex;align-items:center;justify-content:center;background:#4a4a4a;color:#b8b8b8;font-size:5px;height:10px;white-space:nowrap;position:relative}
.vert{width:35px;margin-left:4px}
.spin{font-style:normal;font-size:6px;color:#bbb;width:9px;text-align:center;background:#333;line-height:10px;height:10px}
.cusp{margin:0 5px 0 4px}
.field{background:#0f0f0f;color:#b5b5b5;height:10px;display:flex;align-items:center;padding-left:2px;font-size:5px;font-family:"DejaVu Sans Mono","Liberation Mono",monospace}
.cuspf{flex:none;width:258px}
.opi.stripes{margin-left:2px;width:10px;margin-right:7px}
.geobar{padding-left:2px}
.namef{flex:none;width:345px;margin:0 3px 0 1px;letter-spacing:.3px}
.opi.big{width:13px;height:13px;margin-right:4px}

.scenebody{flex:1;display:grid;grid-template-columns:22px 1fr 20px;min-height:0}
.tbar{background:#393939;display:flex;flex-direction:column;align-items:center;min-height:0}
.tbar-l{padding-top:7px;border-right:1px solid #222}
.tb{width:18px;height:18px;flex:none;display:flex;align-items:center;justify-content:center}
.tb svg{width:13px;height:13px}
.tb.sel,.rb.sel{background:#7a8a92}
.tb.sel:nth-child(5){background:#a6afb5}
.g2{margin-top:2px}
.g3{margin-top:3px}
.g4{margin-top:4px}
.push{margin-top:auto}
.tbar-r{padding-top:16px;border-left:1px solid #222;border-right:1px solid #222}
.rb{width:17px;height:16.500px;flex:none;display:flex;align-items:center;justify-content:center;position:relative}
.rb svg{width:12px;height:12px}
.rb.thin{height:13px}
.rb.thin svg{width:11px;height:11px}
.rb.wide{height:18px}
.rb.sel{background:#6e6e64}
.rb em{font-style:normal;font-size:7px;color:#ddd;position:absolute;right:1px;top:1px}
.rb .dotmini{position:absolute;left:2px;bottom:0;width:9px;height:9px}
.abc{font-size:8px;color:#c8c8c8}

.viewport{position:relative;background:linear-gradient(#d3d4d2,#dcdcda 55%,#ebebea);overflow:hidden;min-width:0}
.scene{width:483px;height:406px}
.vpbtns{position:absolute;right:2px;top:2px;display:flex;align-items:center;gap:3px}
.vlock{width:8px;height:8px}
.vpbtns span{background:#b0b0ae;color:#e8e8e8;font-size:4.500px;height:8px;line-height:8px;padding:0 4px;border-radius:4px;white-space:nowrap}

.paramtabs{display:flex;height:10px;flex:none;padding-left:1px;background:#3a3a3a}
.paramtabs span{padding:0 3px;line-height:10px;font-size:5px;background:#313131;margin-right:1px;color:#aaa}
.paramtabs span.on{background:#474747}
.params{flex:1;background:#3a3a3a;padding-top:4px;overflow:hidden}
.prow{display:flex;align-items:center;height:11px;margin-bottom:1px;gap:2px}
.prow label{width:62px;text-align:right;margin-right:4px;color:#a9a9a9;font-size:5.200px;white-space:nowrap}
.select.sr{width:50px;background:#4a4a4a;margin-right:5px}
.select.rx{width:40px}
.select i{font-style:normal;position:absolute;right:1px;font-size:6px;color:#bbb}
.field.v{width:125px}
.axis{width:14px;height:14px;margin-left:1px}
.prow.cut{margin-top:5px}
.pane-params{height:97px;flex:none}
.splitter{height:3px;flex:none;background:#2b2b2b;display:flex;justify-content:center}
.splitter i{display:block;width:10px;height:2px;background:#555}
.pane-net{flex:1}

.menubar{height:17px;flex:none;display:flex;align-items:center;gap:5.500px;padding-left:9px;background:#3a3a3a;border-bottom:1px solid #1f1f1f;font-size:5.600px;color:#b5b5b5}
.menuicons{flex:1;display:flex;align-items:center;gap:3.500px}
.menuicons svg{width:13px;height:13px;flex:none}
.push2{margin-left:auto}
.m{margin-left:9px}
.seli{background:#6f7f8c;padding:1px;flex:none}
.netcanvas{flex:1;position:relative;background:#2e2e2e;overflow:hidden}
.net{width:473px;height:307px}
.objects{position:absolute;right:3px;top:9px;font-size:11px;font-weight:700;color:#4c4c4c}
.palette{position:absolute;right:0;bottom:0;width:57.600px;height:57.600px;display:grid;grid-template-columns:repeat(6,1fr);grid-template-rows:repeat(6,1fr);background:#222}
.palette i{display:block;border:.5px solid #2e2e2e}

.timeline{display:grid;grid-template-columns:127px 768px 105px;background:#303030;border-top:1px solid #444}
.transport{display:flex;align-items:center;padding-left:5px;gap:1px}
.tbtn{width:12px;height:12px;background:#4a4a4a;color:#ddd;font-size:4.500px;display:flex;align-items:center;justify-content:center;white-space:nowrap}
.stop{background:#a3b0b8;margin:0 1px}
.stop i{width:6px;height:6px;background:#ddd;display:block}
.frame{width:21px;height:12px;background:#141414;margin-left:2px;color:#aaa;font-size:5px;line-height:12px;padding-left:1px}
.tstep{width:5px;height:12px;background:#555;font-size:4px;line-height:12px;text-align:center;color:#ddd}
.range{display:flex;flex-direction:column;gap:1px;margin-left:1px}
.range span{display:block;width:20px;height:7px;line-height:7px;background:#111;color:#ccc;font-size:5px;padding-left:1px}
.range span+span{background:#2b2b2b}
.ruler{width:768px;height:20px}
.tend{display:flex;align-items:center;gap:1px;padding-left:1px}
.r2{margin-left:1px}
.autokey{width:17px;height:17px;border-radius:50%;background:#272727;border:1px solid #444;margin-left:1px;position:relative;flex:none}
.autokey small{position:absolute;left:2px;top:2px;font-size:3.500px;color:#ddd}
.autokey svg{position:absolute;left:3px;top:5px;width:9px;height:9px}
.tcaret{font-style:normal;font-size:5px;color:#ccc;margin:0 2px 0 1px}
.ti{width:10px;height:12px;flex:none}
.ti.sel{background:#7e8f98;display:flex;align-items:center;justify-content:center}
.ti.sel svg{width:9px;height:9px}
.status{background:#161616;position:relative;display:flex;justify-content:flex-end}
.statusline{position:absolute;left:195px;bottom:0;width:607px;height:2px;background:#4a4a4a}
.updater{width:98px;height:18px;background:#303030;display:flex;align-items:center;padding-left:2px;gap:3px}
.ub{width:14px;height:14px}
.au{width:41px;height:11px;margin-left:1px;background:#454545}
.updater .spin{width:8px;height:11px;background:none;line-height:11px}
```
FILE: app.js
```js
const NS = 'http://www.w3.org/2000/svg';
function el(parent, tag, attrs, text) {
  const n = document.createElementNS(NS, tag);
  for (const k in attrs) n.setAttribute(k, attrs[k]);
  if (text !== undefined) n.textContent = text;
  parent.appendChild(n);
  return n;
}
function pts(a) { return a.map(p => p[0].toFixed(2) + ',' + p[1].toFixed(2)).join(' '); }

/* ---- chess board, a projected 8x8 grid ---- */
const scene = document.getElementById('scene');
const F = [228, 417], L = [60, 293], B = [300, 238], R = [461, 293];
function homography(p0, p1, p2, p3) {
  const dx1 = p1[0] - p2[0], dx2 = p3[0] - p2[0], sx = p0[0] - p1[0] + p2[0] - p3[0];
  const dy1 = p1[1] - p2[1], dy2 = p3[1] - p2[1], sy = p0[1] - p1[1] + p2[1] - p3[1];
  const det = dx1 * dy2 - dx2 * dy1;
  const g = (sx * dy2 - dx2 * sy) / det, h = (dx1 * sy - sx * dy1) / det;
  const a = p1[0] - p0[0] + g * p1[0], b = p3[0] - p0[0] + h * p3[0];
  const d = p1[1] - p0[1] + g * p1[1], e = p3[1] - p0[1] + h * p3[1];
  return (u, v) => {
    const w = g * u + h * v + 1;
    return [(a * u + b * v + p0[0]) / w, (d * u + e * v + p0[1]) / w];
  };
}
const P = homography(F, L, B, R);
const down = (p, h) => [p[0], p[1] + h];

// side bands
const sideTan = '#c2a962', sideFill = '#8f8f8f';
function side(a, ha, hb, fill) {
  for (let i = 0; i < 8; i++) {
    const p = a(i / 8), q = a((i + 1) / 8);
    const h1 = ha + (hb - ha) * i / 8, h2 = ha + (hb - ha) * (i + 1) / 8;
    el(scene, 'polygon', { points: pts([p, q, down(q, h2), down(p, h1)]), fill, stroke: sideTan, 'stroke-width': .7 });
  }
}
side(t => P(t, 0), 14, 7, '#9a9a9a');
side(t => P(0, t), 14, 8, sideFill);

// tiles
for (let i = 7; i >= 0; i--) {
  for (let j = 7; j >= 0; j--) {
    const black = (i + j) % 2 === 0;
    const q = [P(i / 8, j / 8), P((i + 1) / 8, j / 8), P((i + 1) / 8, (j + 1) / 8), P(i / 8, (j + 1) / 8)];
    el(scene, 'polygon', { points: pts(q), fill: black ? '#232220' : '#8d8d92', stroke: black ? '#c9a83e' : '#b3a27a', 'stroke-width': black ? 1 : .5 });
    const c = P((i + .5) / 8, (j + .5) / 8);
    if (black) el(scene, 'path', { d: `M${c[0] - 1.600} ${c[1] + .6}q1.600 -2 3.200 0`, fill: 'none', stroke: '#9a9a9a', 'stroke-width': .5 });
    else el(scene, 'circle', { cx: c[0], cy: c[1], r: .6, fill: '#333' });
  }
}

/* ---- pieces, written in 3x crop coordinates ---- */
const g = el(scene, 'g', { transform: 'translate(100 210) scale(.33333)' });
const cream = ['#efe0bf', '#e9d9b4', '#dfcca2', '#a8966c'];
const dark = ['#231e1a', '#1d1916', '#171411', '#0e0c0a'];
function box(o) {
  const [fx, fy, lx, ly, rx, ry, h, pal] = o;
  const c = pal === 'c' ? cream : dark;
  const fb = [fx, fy], lb = [fx + lx, fy + ly], rb = [fx + rx, fy + ry];
  const ft = [fx, fy - h], lt = [fx + lx, fy + ly - h], rt = [fx + rx, fy + ry - h], bt = [fx + lx + rx, fy + ly + ry - h];
  const a = { stroke: c[3], 'stroke-width': 1.200, 'stroke-linejoin': 'round' };
  el(g, 'polygon', { points: pts([ft, lt, lb, fb]), fill: c[1], ...a });
  el(g, 'polygon', { points: pts([ft, rt, rb, fb]), fill: c[2], ...a });
  el(g, 'polygon', { points: pts([ft, rt, bt, lt]), fill: c[0], ...a });
}
const pieces = [
  [-85,225,-38,-15,38,-15,70,'d'],[-50,200,-30,-12,30,-12,55,'d'],
  [495,145,-40,-15,35,-20,95,'d'],[555,110,-25,-10,25,-10,40,'d'],[415,135,-30,-10,35,-15,85,'d'],[345,150,-35,-12,35,-12,75,'d'],
  [275,245,-35,-15,35,-15,135,'d'],[275,125,-35,-15,35,-15,50,'d'],
  [105,195,-45,-18,55,-18,80,'d'],[60,180,-30,-15,25,-10,45,'d'],
  [200,170,-45,-20,50,-20,60,'d'],[230,250,-40,-15,40,-15,100,'d'],[185,240,-45,-20,55,-20,70,'d'],
  [25,320,-30,-15,35,-15,45,'d'],[75,250,-30,-15,30,-15,45,'d'],
  [420,155,-30,-10,20,-10,40,'d'],[465,225,-30,-10,30,-10,50,'d'],
  [145,315,-15,-5,25,-5,65,'c'],[215,320,-22,-5,25,-5,70,'c'],[175,335,-20,-8,20,-8,65,'c'],[187,250,-18,-8,20,-8,22,'c'],
  [530,260,-30,-12,35,-12,50,'c'],[690,265,-55,-20,55,-20,70,'c'],[1015,270,-60,-25,55,-20,65,'c'],[925,250,-37,-15,25,-12,35,'c'],
  [855,272,-35,-15,27,-12,37,'c'],[790,305,-40,-15,30,-15,55,'c'],[795,395,-35,-25,55,-25,65,'c'],[605,360,-35,-15,35,-15,35,'c'],
  [700,430,-60,-30,62,-25,85,'c'],[510,420,-35,-10,35,-10,60,'c'],[430,455,-55,-20,60,-20,40,'c'],[490,525,-60,-25,75,-30,70,'c'],
  [565,450,-25,-10,15,-3,70,'c'],[640,460,-20,-3,28,-10,80,'c'],[600,482,-20,-5,20,-5,95,'c'],[290,505,-38,-30,45,-30,45,'c'],[375,590,-72,-40,75,-45,90,'c']
];
pieces.forEach(box);
el(g, 'circle', { cx: 195, cy: 75, r: 29, fill: '#1d1916' });
// lattice sphere
el(g, 'circle', { cx: 703, cy: 280, r: 40, fill: '#d6c7a6', stroke: '#a8966c', 'stroke-width': 1 });
for (let i = -3; i <= 3; i++) {
  el(g, 'ellipse', { cx: 703, cy: 280, rx: Math.abs(i) * 13 + .1, ry: 40, fill: 'none', stroke: '#b09e76', 'stroke-width': .7 });
  const y = 280 + i * 12, w = Math.sqrt(1600 - 144 * i * i);
  el(g, 'line', { x1: 703 - w, x2: 703 + w, y1: y, y2: y, stroke: '#b09e76', 'stroke-width': .7 });
}

// normals drawn as short violet ticks
[[25,205],[68,175],[20,235],[165,155],[222,185],[253,135],[430,60],[488,60],[555,50],[690,195],[920,175],[852,195],[777,215],[1018,170],
 [610,280],[510,325],[405,365],[290,415],[495,420],[380,450],[575,340]].forEach(t => {
  el(g, 'line', { x1: t[0], x2: t[0], y1: t[1] - 17, y2: t[1] + 17, stroke: '#b45ae0', 'stroke-width': 2, opacity: .85 });
});
[[0,270,25,262],[200,520,240,510],[520,555,560,548],[650,480,685,490],[830,395,865,410],[745,430,780,440],[905,280,930,290],[950,270,975,262],
 [130,222,150,218],[590,95,605,90],[410,578,450,600]].forEach(t => {
  el(g, 'line', { x1: t[0], y1: t[1], x2: t[2], y2: t[3], stroke: '#b45ae0', 'stroke-width': 1.500, opacity: .85 });
});

// rotate handle
el(g, 'circle', { cx: 452, cy: 255, r: 205, fill: 'none', stroke: '#5a4560', 'stroke-width': 2, opacity: .65 });
el(g, 'path', { d: 'M570 160C520 90 430 70 370 130C320 180 310 260 318 300', fill: 'none', stroke: '#2226c8', 'stroke-width': 2 });
el(g, 'path', { d: 'M365 135C390 95 450 80 490 105C540 140 565 230 570 310', fill: 'none', stroke: '#d81818', 'stroke-width': 2 });
el(g, 'path', { d: 'M570 310C565 360 510 400 455 405', fill: 'none', stroke: '#c06060', 'stroke-width': 1.500, opacity: .7 });
el(g, 'path', { d: 'M316 300C380 330 500 330 570 310M316 300C290 295 275 275 285 255M570 310C610 295 625 265 605 230', fill: 'none', stroke: '#18a020', 'stroke-width': 2 });
el(g, 'line', { x1: 453, y1: 250, x2: 453, y2: 155, stroke: '#12b020', 'stroke-width': 2.500 });
el(g, 'polygon', { points: '453,148 448,162 458,162', fill: '#12b020' });
el(g, 'line', { x1: 453, y1: 252, x2: 378, y2: 280, stroke: '#e0502a', 'stroke-width': 3 });
el(g, 'rect', { x: 381, y: 190, width: 8, height: 11, fill: '#2226c8' });
[[453,91,'#e81818'],[570,308,'#e81818'],[315,300,'#a85050'],[455,405,'#a85050']].forEach(d => el(g, 'circle', { cx: d[0], cy: d[1], r: 5, fill: d[2] }));

// world axes
el(scene, 'path', { d: 'M27 487V479', stroke: '#30a030', 'stroke-width': 1 });
el(scene, 'path', { d: 'M27 487l3-7', stroke: '#40b040', 'stroke-width': 1 });
el(scene, 'path', { d: 'M26 487h4', stroke: '#d02020', 'stroke-width': 1.200 });
el(scene, 'path', { d: 'M26 487l-1 2', stroke: '#3040d0', 'stroke-width': 1.200 });

/* ---- node network ---- */
const net = document.getElementById('net');
function drawNode(x, y, fill, l, r, lbl, tc) {
  el(net, 'rect', { x, y, width: 9.500, height: 4.500, fill, rx: .4 });
  el(net, 'rect', { x, y, width: 2, height: 4.500, fill: l });
  el(net, 'rect', { x: x + 7.500, y, width: 2, height: 4.500, fill: r });
  el(net, 'line', { x1: x + 4.700, x2: x + 4.700, y1: y - 1, y2: y + 5.500, stroke: tc, 'stroke-width': .5 });
  if (lbl) el(net, 'text', { x: x + 11, y: y + 3, fill: tc, 'font-size': 2.200, 'font-family': 'Liberation Sans' }, lbl);
}
function drawRound(x, y, main, lbl, tc) {
  el(net, 'circle', { cx: x, cy: y, r: 3, fill: main });
  el(net, 'path', { d: `M${x} ${y}V${y - 3}A3 3 0 0 1 ${x + 3} ${y}z`, fill: '#7aa04c' });
  el(net, 'path', { d: `M${x} ${y}H${x - 3}A3 3 0 0 1 ${x} ${y - 3}z`, fill: '#4d80b8' });
  if (lbl) el(net, 'text', { x: x + 4, y: y + 1, fill: tc, 'font-size': 2.200, 'font-family': 'Liberation Sans' }, lbl);
}
el(net, 'rect', { x: 716, y: 204, width: 198, height: 131, fill: '#8b8b8b' });
el(net, 'rect', { x: 716, y: 204, width: 198, height: 3, fill: '#dcdcdc' });
el(net, 'text', { x: 718, y: 206.400, fill: '#555', 'font-size': 2.200, 'font-family': 'Liberation Sans' }, 'Bauhaus white');
el(net, 'rect', { x: 717, y: 343, width: 196, height: 122, fill: '#8a4f78' });
el(net, 'rect', { x: 717, y: 343, width: 196, height: 3, fill: '#b6569b' });
el(net, 'text', { x: 719, y: 345.400, fill: '#3d2035', 'font-size': 2.200, 'font-family': 'Liberation Sans' }, 'Bauhaus black');

const gx = z => 670 + z / 3, gy = z => 200 + z / 3, px = z => 710 + z / 3, py = z => 340 + z / 3;
const TG = '#dddddd', TP = '#e0c8dc';
[[45,'#3e3e3e','#7a9a40','#4a7ab8'],[67,'#3e3e3e','#7a9a40','#4a7ab8'],[93,'#e02020','#e02020','#ff3030'],[115,'#e02020','#e02020','#ff3030'],
 [138,'#90d0b0','#90d0b0','#6ab8e0'],[162,'#90d0b0','#90d0b0','#6ab8e0'],[185,'#5c9a28','#5c9a28','#76b030'],[210,'#5c9a28','#5c9a28','#76b030'],
 [247,'#e8e010','#e8e010','#f4ea10'],[272,'#e8e010','#e8e010','#f4ea10'],[298,'#e8e010','#e8e010','#f4ea10'],[324,'#e8e010','#e8e010','#f4ea10'],[350,'#e8e010','#e8e010','#f4ea10']]
  .forEach(n => drawNode(gx(175), gy(n[0]) - 2, n[1], n[2], n[3], 'geo_piece', TG));
[247,272,298].forEach(y => drawNode(gx(250), gy(y) - 2, '#e8e010', '#e8e010', '#f4ea10', 'geo_copy', TG));
const GN = ['#3e3e3e', '#7a9a40', '#4a7ab8'];
[[[310,365,420,472],52],[[310,365,420,472],73],[[310,365,420],115],[[480],135],[[322,382,442,503,565],215],[[322,382,442],277]]
  .forEach(r => r[0].forEach(x => drawNode(gx(x), gy(r[1]) - 2, GN[0], GN[1], GN[2], 'attrib', TG)));
[[[325,378,434],138],[[495],160],[[337,396,456,517,580],240],[[337,396,456],300]]
  .forEach(r => r[0].forEach(x => drawRound(gx(x), gy(r[1]), '#333', 'out', TG)));
[188,211,231].forEach(y => drawNode(gx(45), gy(y) - 2, '#d8d8d8', '#b8b8a8', '#e8e8e8', 'chess', '#aaa'));
el(net, 'rect', { x: gx(58), y: gy(310), width: 11, height: 5, fill: 'none', stroke: '#e8d020', 'stroke-width': .8 });
drawNode(gx(60), gy(316) - 2, '#cfcfcf', '#a8a898', '#e0e0e0', 'Bauhaus', '#aaa');
drawNode(gx(10), gy(368) - 2, '#cfe0f0', '#7ab0e0', '#4a90d0', 'light', '#aaa');
drawNode(gx(8), gy(394) - 2, '#3f78a8', '#3f78a8', '#4a90d0', 'cam', '#aaa');

[[25,'#c8c8a0','#a8c070','#b8c8d0'],[47,'#c8c8a0','#a8c070','#b8c8d0'],[67,'#7a4a70','#a09020','#4a70a0'],[88,'#7a4a70','#a09020','#4a70a0'],
 [113,'#8cc0f0','#8cc0f0','#70a8e0'],[136,'#8cc0f0','#8cc0f0','#70a8e0'],[159,'#f0e010','#f0e010','#f0e010'],[183,'#f0e010','#f0e010','#f0e010'],
 [221,'#f01818','#f01818','#d01010'],[247,'#f01818','#f01818','#d01010'],[273,'#f01818','#f01818','#d01010'],[298,'#f01818','#f01818','#d01010'],[323,'#f01818','#f01818','#d01010']]
  .forEach(n => drawNode(px(55), py(n[0]) - 2, n[1], n[2], n[3], 'geo_piece', TP));
[221,247,272].forEach(y => drawNode(px(117), py(y) - 2, '#f01818', '#f01818', '#d01010', 'geo_copy', TP));
const WN = ['#f2f2f2', '#b0d060', '#8aa8e0'];
[[[192,246,300,354],37],[[192,246,300,354],59],[[192,246,300,354],100],[[196,255,315,376,438],168],[[196,255,315],229]]
  .forEach(r => r[0].forEach(x => drawNode(px(x), py(r[1]) - 2, WN[0], WN[1], WN[2], 'attrib', TP)));
[[[205,259,315,368],124],[[210,269,330,390,453],190],[[210,269,330],253]]
  .forEach(r => r[0].forEach(x => drawRound(px(x), py(r[1]), '#f0f0f0', 'out', TP)));

/* ---- colour palette ---- */
const colours = ['#c00000','#ff0000','#ff4d4d','#ffaaaa','#ff8aa8','#a0506a','#a05a00','#c08c10','#ffc040','#fff0a8','#ffe000','#ffb400',
  '#4a8a20','#80d030','#c8ff90','#a0dcc0','#20a888','#308870','#1c60b0','#5098e8','#90c0ff','#b8c8ff','#8c98c8','#606c98',
  '#58409c','#7060d0','#9080e0','#e060c0','#983080','#602860','#000000','#484848','#808080','#a0a0a0','#d8d8d8','#ffffff'];
const palette = document.getElementById('palette');
colours.forEach(c => { const i = document.createElement('i'); i.style.background = c; palette.appendChild(i); });

/* ---- timeline ruler ---- */
const ruler = document.getElementById('ruler');
const fx = f => 129 + (f - 1) * 3.07;
el(ruler, 'line', { x1: 128, x2: 893, y1: 503.500, y2: 503.500, stroke: '#8a8a8a', 'stroke-width': 1 });
el(ruler, 'line', { x1: 128, x2: 893, y1: 513, y2: 513, stroke: '#707070', 'stroke-width': 1.500 });
el(ruler, 'polygon', { points: '128,510.500 131,513 128,515.500', fill: '#bbb' });
el(ruler, 'polygon', { points: '893,510.500 890,513 893,515.500', fill: '#bbb' });
for (let f = 5; f <= 250; f += 5) {
  const major = f % 25 === 0;
  el(ruler, 'line', { x1: fx(f), x2: fx(f), y1: major ? 499 : 502, y2: 505, stroke: '#8a8a8a', 'stroke-width': .7 });
  if (major && f < 250) el(ruler, 'text', { x: fx(f) + .5, y: 501, fill: '#9a9a9a', 'font-size': 4.300, 'font-family': 'Liberation Sans' }, f);
}
el(ruler, 'text', { x: 128.500, y: 501, fill: '#9a9a9a', 'font-size': 4.300, 'font-family': 'Liberation Sans' }, '1');
el(ruler, 'rect', { x: 616, y: 495, width: 12, height: 7.500, fill: '#0c0c0c', stroke: '#ddd', 'stroke-width': .4 });
el(ruler, 'polygon', { points: '620,502.500 622,504.500 624,502.500', fill: '#0c0c0c' });
el(ruler, 'text', { x: 622, y: 501, fill: '#ddd', 'font-size': 5, 'text-anchor': 'middle', 'font-family': 'Liberation Sans' }, '162');
```
